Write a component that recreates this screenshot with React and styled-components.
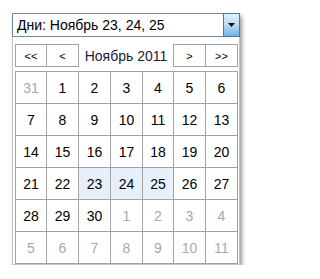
import React from 'react';
import styled, { createGlobalStyle } from 'styled-components';

const GlobalStyle = createGlobalStyle`
  body {
    margin: 0;
    background: #fff;
    font-family: "Liberation Sans", Arial, sans-serif;
  }
`;

const WEEKS = [
  [[31, 1], 1, 2, 3, 4, 5, 6],
  [7, 8, 9, 10, 11, 12, 13],
  [14, 15, 16, 17, 18, 19, 20],
  [21, 22, 23, 24, 25, 26, 27],
  [28, 29, 30, [1, 1], [2, 1], [3, 1], [4, 1]],
  [[5, 1], [6, 1], [7, 1], [8, 1], [9, 1], [10, 1], [11, 1]],
];

const SELECTED = [23, 24, 25];

const App = () => {
  return (
    <Page>
      <GlobalStyle />
      <Widget>
        <Field>
          <FieldText>Дни: Ноябрь 23, 24, 25</FieldText>
          <DropButton>
            <svg width="7" height="4" viewBox="0 0 7 4">
              <path d="M0 0h7L3.5 4z" fill="#111" />
            </svg>
          </DropButton>
        </Field>

        <Popup>
          <Header>
            <NavButton $w={32}>&lt;&lt;</NavButton>
            <NavButton $w={33} $joined>&lt;</NavButton>
            <Title>Ноябрь 2011</Title>
            <NavButton $w={33}>&gt;</NavButton>
            <NavButton $w={33} $joined>&gt;&gt;</NavButton>
          </Header>

          <Days>
            {WEEKS.flat().map((d, i) => {
              const other = Array.isArray(d);
              const day = other ? d[0] : d;
              return (
                <Day key={i} $other={other} $selected={!other && SELECTED.includes(day)}>
                  {day}
                </Day>
              );
            })}
          </Days>
        </Popup>
      </Widget>
    </Page>
  );
};

const Page = styled.div`
  padding: 13px 0 0 12px;
`;

const Widget = styled.div`
  width: 228px;
  box-shadow: 2px 3px 4px rgba(0, 0, 0, 0.4);
`;

const Field = styled.div`
  display: flex;
  height: 24px;
  box-sizing: border-box;
  border: 1px solid #6f8aa6;
  background: #fff;
`;

const FieldText = styled.div`
  flex: 1;
  padding-left: 4px;
  font-size: 14px;
  line-height: 22px;
  color: #000;
  white-space: nowrap;
`;

const DropButton = styled.div`
  width: 15px;
  display: flex;
  align-items: center;
  justify-content: center;
  border-left: 1px solid #3f7db0;
  background: linear-gradient(#e4f0fa, #b9daf3 50%, #6fb3e4);
  margin: -1px -1px -1px 0;
  border-top: 1px solid #3f7db0;
  border-right: 1px solid #3f7db0;
  border-bottom: 1px solid #3f7db0;
`;

const Popup = styled.div`
  border: 1px solid #c4c4c4;
  border-top: none;
  padding: 7px 1px 0 2px;
  background: #fff;
`;

const Header = styled.div`
  display: flex;
  height: 23px;
  margin-bottom: 4px;
`;

const NavButton = styled.div`
  width: ${p => p.$w}px;
  box-sizing: border-box;
  margin-left: ${p => (p.$joined ? -1 : 0)}px;
  border: 1px solid #a3a3a3;
  display: flex;
  align-items: center;
  justify-content: center;
  font-size: 11px;
  color: #000;
`;

const Title = styled.div`
  flex: 1;
  display: flex;
  align-items: center;
  justify-content: center;
  font-size: 14px;
  color: #1b1b3a;
`;

const Days = styled.div`
  display: grid;
  grid-template-columns: 31px 32px 32px 32px 31px 32px 32px;
  grid-auto-rows: 32px;
  border-left: 1px solid #a3a3a3;
  border-top: 1px solid #a3a3a3;
`;

const Day = styled.div`
  box-sizing: border-box;
  border-right: 1px solid #a3a3a3;
  border-bottom: 1px solid #a3a3a3;
  display: flex;
  align-items: center;
  justify-content: center;
  font-size: 14px;
  color: ${p => (p.$other ? '#a8a8a8' : '#000')};
  background: ${p => (p.$selected ? '#e7effd' : '#fff')};
`;

export default App;
